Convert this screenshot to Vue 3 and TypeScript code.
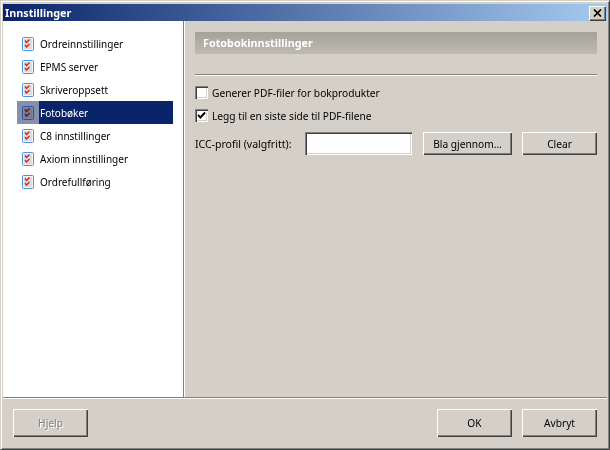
<script setup lang="ts">
const items = [
  "Ordreinnstillinger",
  "EPMS server",
  "Skriveroppsett",
  "Fotobøker",
  "C8 innstillinger",
  "Axiom innstillinger",
  "Ordrefullføring",
];
const selected = "Fotobøker";
</script>

<template>
  <div class="window">
    <div class="titlebar">
      <span class="title">Innstillinger</span>
      <button class="close" aria-label="Lukk">
        <svg width="9" height="8" viewBox="0 0 9 8">
          <path d="M1 0.500l7 7M8 0.500l-7 7" fill="none" stroke="#000" stroke-width="1.700" />
        </svg>
      </button>
    </div>

    <div class="body">
      <div class="sidebar">
        <div
          v-for="item in items"
          :key="item"
          class="nav-item"
          :class="{ active: item === selected }"
        >
          <span class="nav-icon">
            <svg width="12" height="14" viewBox="0 0 12 14">
              <rect x="0.500" y="0.500" width="11" height="13" rx="1" fill="#f4f4f4" stroke="#4a94e0" />
              <rect x="2" y="2" width="8" height="10" fill="#dedcdc" />
              <path d="M3 3.500l1.500 2 3-3M3 8l1.500 2 3-3" fill="none" stroke="#d02020" stroke-width="1.300" />
            </svg>
          </span>
          <span class="nav-label">{{ item }}</span>
        </div>
      </div>

      <div class="content">
        <div class="panel-head">Fotobokinnstillinger</div>
        <div class="rule"></div>
        <label class="check-row">
          <span class="check"></span>
          Generer PDF-filer for bokprodukter
        </label>
        <label class="check-row">
          <span class="check">
            <svg width="9" height="9" viewBox="0 0 9 9">
              <path d="M1 4l2.500 2.500L8 1.500" fill="none" stroke="#000" stroke-width="2" />
            </svg>
          </span>
          Legg til en siste side til PDF-filene
        </label>
        <div class="icc-row">
          <span class="icc-label">ICC-profil (valgfritt):</span>
          <input class="icc-input" type="text" />
          <button class="btn browse">Bla gjennom...</button>
          <button class="btn clear">Clear</button>
        </div>
      </div>
    </div>

    <div class="footer">
      <button class="btn help" disabled>Hjelp</button>
      <div class="spacer"></div>
      <button class="btn ok">OK</button>
      <button class="btn cancel">Avbryt</button>
    </div>
  </div>
</template>

<style>
html,
body {
  margin: 0;
  background: #d4d0c8;
}
</style>

<style scoped>
.window {
  box-sizing: border-box;
  width: 610px;
  height: 450px;
  display: flex;
  flex-direction: column;
  padding: 4px 3px 3px;
  background: #d4d0c8;
  border-top: 1px solid #d4d0c8;
  border-left: 1px solid #d4d0c8;
  border-right: 1px solid #404040;
  border-bottom: 1px solid #404040;
  box-shadow: inset 1px 1px 0 #fff, inset -1px -1px 0 #808080;
  font-family: "Noto Sans", sans-serif;
  font-size: 10.2px;
  color: #000;
}
.titlebar {
  flex: none;
  height: 17px;
  margin: -1px -1px 0 -1px;
  padding: 0 2px;
  display: flex;
  align-items: center;
  justify-content: space-between;
  background: linear-gradient(90deg, #0a246a, #a6caf0);
}
.title {
  color: #fff;
  font-weight: 700;
  font-size: 10.8px;
}
.close {
  box-sizing: border-box;
  width: 16px;
  height: 14px;
  padding: 0;
  display: flex;
  align-items: center;
  justify-content: center;
  background: #d4d0c8;
  border: none;
  box-shadow: inset 1px 1px 0 #fff, inset -1px -1px 0 #808080, 1px 1px 0 #404040;
}
.body {
  flex: none;
  height: 376px;
  margin: 0 -1px;
  display: flex;
  border-bottom: 1px solid #808080;
  box-shadow: 0 1px 0 #fff;
}
.sidebar {
  box-sizing: border-box;
  flex: none;
  width: 181px;
  padding: 11px 10px 0 14px;
  background: #fff;
  border-right: 1px solid #808080;
  box-shadow: 1px 0 0 #fff;
}
.nav-item {
  height: 23px;
  display: flex;
  align-items: center;
}
.nav-icon {
  flex: none;
  box-sizing: border-box;
  width: 22px;
  height: 23px;
  padding-left: 5px;
  display: flex;
  align-items: center;
}
.nav-icon svg {
  display: block;
}
.nav-label {
  flex: 1;
  height: 23px;
  line-height: 25px;
  padding-left: 1px;
  font-size: 10px;
  white-space: nowrap;
}
.nav-item.active .nav-icon {
  background: #8490ad;
}
.nav-item.active .nav-icon svg {
  mix-blend-mode: multiply;
}
.nav-item.active .nav-label {
  background: #0a246a;
  color: #fff;
}
.content {
  flex: 1;
  padding: 11px 10px 0 11px;
}
.panel-head {
  box-sizing: border-box;
  height: 22px;
  line-height: 22px;
  padding-left: 8px;
  background: linear-gradient(180deg, #a5a29a, #bdbab2);
  color: #fff;
  font-weight: 700;
  font-size: 10.8px;
}
.rule {
  height: 1px;
  margin-top: 20px;
  background: #808080;
  box-shadow: 0 1px 0 #fff;
}
.check-row {
  height: 23px;
  display: flex;
  align-items: center;
  gap: 4px;
  white-space: nowrap;
}
.rule + .check-row {
  margin-top: 6px;
}
.check {
  box-sizing: border-box;
  flex: none;
  width: 13px;
  height: 13px;
  display: flex;
  align-items: center;
  justify-content: center;
  background: #fff;
  box-shadow: inset 1px 1px 0 #808080, inset 2px 2px 0 #404040, inset -1px -1px 0 #fff, inset -2px -2px 0 #d4d0c8;
}
.check svg {
  display: block;
}
.icc-row {
  display: flex;
  align-items: center;
  margin-top: 5px;
  height: 23px;
}
.icc-label {
  width: 110px;
  flex: none;
  font-size: 10.5px;
  white-space: nowrap;
}
.icc-input {
  box-sizing: border-box;
  flex: none;
  width: 107px;
  height: 23px;
  padding: 0;
  border: none;
  background: #fff;
  box-shadow: inset 1px 1px 0 #808080, inset 2px 2px 0 #404040, inset -1px -1px 0 #fff, inset -2px -2px 0 #d4d0c8;
  outline: none;
}
.btn {
  box-sizing: border-box;
  flex: none;
  height: 23px;
  padding: 0;
  border: none;
  background: #d4d0c8;
  color: #000;
  font: inherit;
  box-shadow: inset 1px 1px 0 #fff, inset -1px -1px 0 #404040, inset -2px -2px 0 #808080;
}
.browse {
  width: 89px;
  margin-left: 11px;
}
.clear {
  width: 75px;
  margin-left: 10px;
}
.footer {
  flex: 1;
  display: flex;
  align-items: flex-start;
  padding: 11px 10px 0;
  margin: 0 -1px;
}
.footer .btn {
  height: 28px;
}
.help {
  width: 75px;
  color: #808080;
  text-shadow: 1px 1px 0 #fff;
}
.spacer {
  flex: 1;
}
.ok {
  width: 75px;
}
.cancel {
  width: 75px;
  margin-left: 10px;
}
</style>
